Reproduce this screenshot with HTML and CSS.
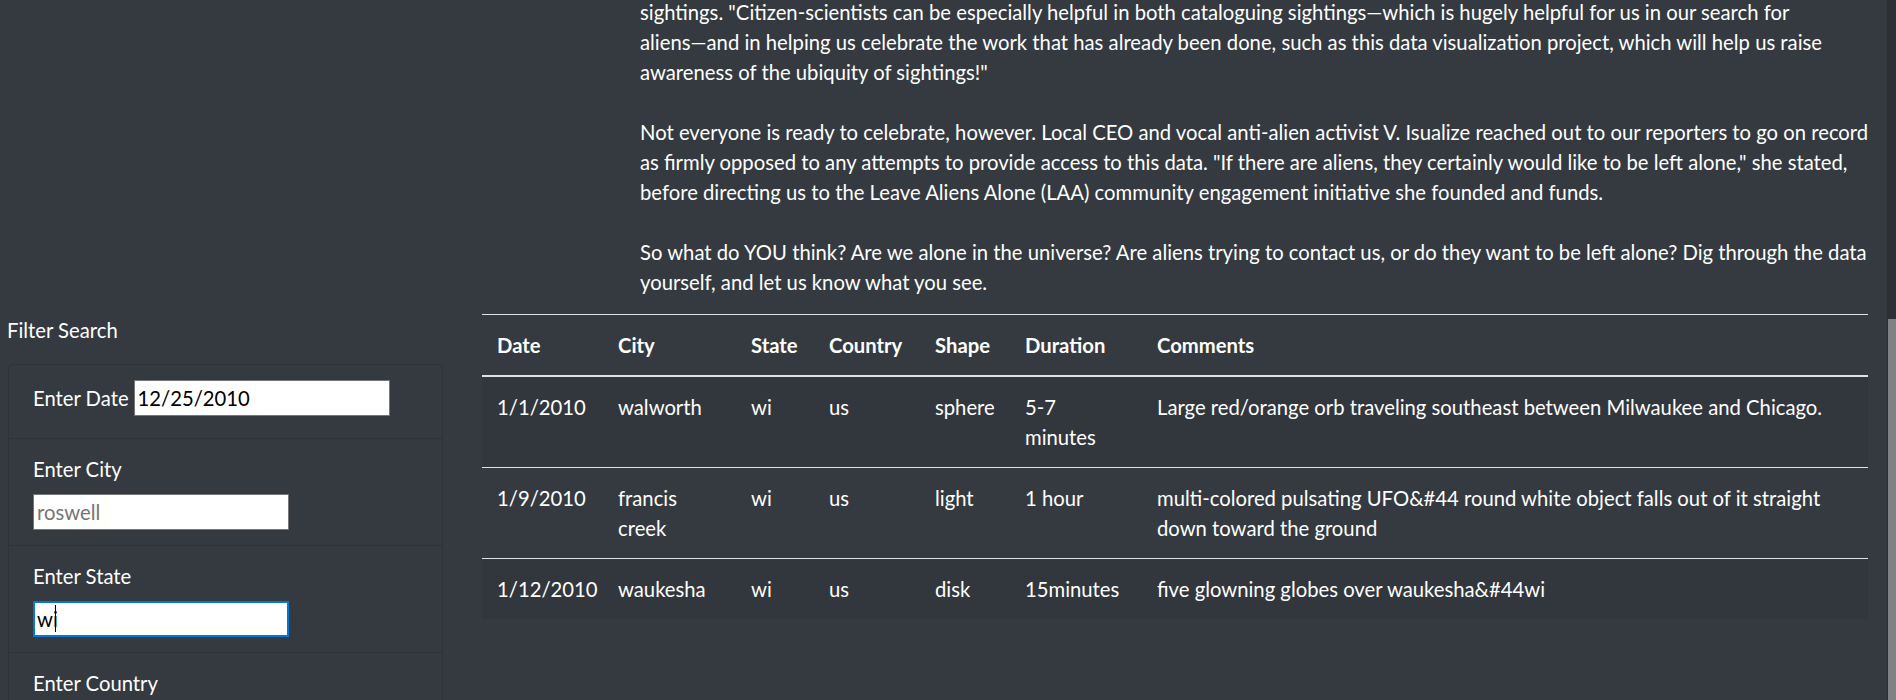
FILE: index.html
```html
<!DOCTYPE html>
<html lang="en">
<head>
<meta charset="utf-8">
<title>UFO Sightings</title>
<link rel="stylesheet" href="styles.css">
</head>
<body>
<div class="page">
  <div class="article">
    <p>sightings. "Citizen-scientists can be especially helpful in both cataloguing sightings—which is hugely helpful for us in our search for<br>aliens—and in helping us celebrate the work that has already been done, such as this data visualization project, which will help us raise<br>awareness of the ubiquity of sightings!"</p>
    <p>Not everyone is ready to celebrate, however. Local CEO and vocal anti-alien activist V. Isualize reached out to our reporters to go on record<br>as firmly opposed to any attempts to provide access to this data. "If there are aliens, they certainly would like to be left alone," she stated,<br>before directing us to the Leave Aliens Alone (LAA) community engagement initiative she founded and funds.</p>
    <p class="last">So what do YOU think? Are we alone in the universe? Are aliens trying to contact us, or do they want to be left alone? Dig through the data<br>yourself, and let us know what you see.</p>
  </div>
  <div class="main">
    <div class="sidebar">
      <div class="filter-title">Filter Search</div>
      <ul class="filters">
        <li class="filter inline">
          <label for="datetime">Enter Date</label>
          <input class="field" type="text" id="datetime" value="12/25/2010">
        </li>
        <li class="filter">
          <label for="city">Enter City</label>
          <input class="field" type="text" id="city" placeholder="roswell">
        </li>
        <li class="filter">
          <label for="state">Enter State</label>
          <span class="caret-wrap"><input class="field focused" type="text" id="state" value="wi"></span>
        </li>
        <li class="filter">
          <label for="country">Enter Country</label>
          <input class="field" type="text" id="country" placeholder="us">
        </li>
      </ul>
    </div>
    <div class="results">
      <table class="ufo-table">
        <colgroup>
          <col class="c-date"><col class="c-city"><col class="c-state"><col class="c-country"><col class="c-shape"><col class="c-duration"><col>
        </colgroup>
        <thead>
          <tr><th>Date</th><th>City</th><th>State</th><th>Country</th><th>Shape</th><th>Duration</th><th>Comments</th></tr>
        </thead>
        <tbody>
          <tr class="odd"><td>1/1/2010</td><td>walworth</td><td>wi</td><td>us</td><td>sphere</td><td>5-7 minutes</td><td>Large red/orange orb traveling southeast between Milwaukee and Chicago.</td></tr>
          <tr><td>1/9/2010</td><td>francis creek</td><td>wi</td><td>us</td><td>light</td><td>1 hour</td><td>multi-colored pulsating UFO&amp;#44 round white object falls out of it straight down toward the ground</td></tr>
          <tr class="odd"><td>1/12/2010</td><td>waukesha</td><td>wi</td><td>us</td><td>disk</td><td>15minutes</td><td>five glowning globes over waukesha&amp;#44wi</td></tr>
        </tbody>
      </table>
    </div>
  </div>
</div>
<div class="scrollbar"><div class="thumb"></div></div>
</body>
</html>
```

FILE: styles.css
```css
html, body {
  margin: 0;
  padding: 0;
}

body {
  height: 700px;
  overflow: hidden;
  display: flex;
  background: #343a40;
  color: #fff;
  font-family: Lato, "Open Sans", sans-serif;
  font-size: 20.25px;
  line-height: 30px;
}

.page {
  flex: 1;
  min-width: 0;
}

.article {
  margin-top: -3px;
  padding: 0 19px 0 640px;
}

.article p {
  margin: 0 0 30px;
  white-space: nowrap;
}

.article p.last {
  margin-bottom: 17px;
}

.main {
  display: grid;
  grid-template-columns: 482px 1fr;
  padding-right: 19px;
}

.sidebar {
  padding-left: 8px;
}

.filter-title {
  padding-top: 1px;
  padding-bottom: 2px;
  margin-left: -1px;
}

.filters {
  list-style: none;
  margin: 17px 0 0;
  padding: 0;
  width: 435px;
  box-sizing: border-box;
  border: 1px solid #2e3338;
  border-radius: 5px;
}

.filter {
  padding: 17px 24px 15px;
  border-top: 1px solid #2e3338;
}

.filter:first-child {
  border-top: 0;
}

.filter label {
  display: block;
  margin: -2px 0 10px;
}

.filter.inline {
  display: flex;
  align-items: baseline;
  gap: 5px;
  padding: 15px 24px 22px;
}

.filter.inline label {
  margin: 0;
}

.field {
  display: block;
  box-sizing: border-box;
  width: 256px;
  height: 36px;
  margin: 0;
  padding: 0 3px;
  border: 1px solid #767676;
  border-radius: 0;
  background: #fff;
  color: #000;
  font-family: Lato, "Open Sans", sans-serif;
  font-size: 20.25px;
  outline: none;
}

.field::placeholder {
  color: #757575;
}

.field.focused {
  border-color: #0078d7;
  box-shadow: inset 0 0 0 1px #0078d7;
}

.caret-wrap {
  position: relative;
  display: block;
  width: 256px;
}

.caret-wrap::after {
  content: "";
  position: absolute;
  left: 22px;
  top: 4px;
  width: 1px;
  height: 27px;
  background: #000;
}

.ufo-table {
  width: 100%;
  table-layout: fixed;
  border-collapse: collapse;
  color: #fff;
}

.c-date { width: 121px; }
.c-city { width: 133px; }
.c-state { width: 78px; }
.c-country { width: 106px; }
.c-shape { width: 90px; }
.c-duration { width: 132px; }

.ufo-table th,
.ufo-table td {
  padding: 15px;
  text-align: left;
  vertical-align: top;
  border-top: 1px solid #dee2e6;
  line-height: 30px;
}

.ufo-table th {
  font-weight: 700;
  border-bottom: 2px solid #dee2e6;
}

.ufo-table tr.odd td {
  background: #31373d;
}

.scrollbar {
  width: 9px;
  flex: none;
  display: flex;
  flex-direction: column;
  background: #2c3036;
}

.thumb {
  flex: 1;
  margin: 319px 0 0 1px;
  background: #808185;
}
```
